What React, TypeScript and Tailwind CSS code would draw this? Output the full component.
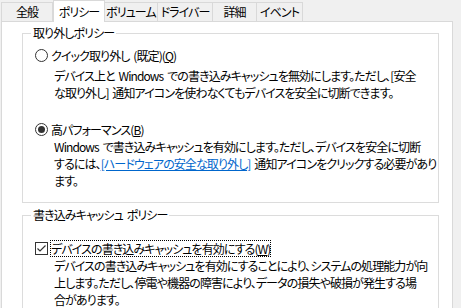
import React from 'react';

const tabs = [
    { label: '全般', w: 'w-[52px]' },
    { label: 'ポリシー', w: 'w-[52px]', active: true },
    { label: 'ボリューム', w: 'w-[54px]' },
    { label: 'ドライバー', w: 'w-[56px]' },
    { label: '詳細', w: 'w-[45px]' },
    { label: 'イベント', w: 'w-[47px]' },
];

function Radio({ checked }: { checked?: boolean }) {
    return (
        <span className="w-[13px] h-[13px] rounded-full border border-[#333333] bg-white flex items-center justify-center shrink-0">
            {checked && <span className="w-[7px] h-[7px] rounded-full bg-[#333333]" />}
        </span>
    );
}

function Checkbox() {
    return (
        <span className="w-[13px] h-[13px] border border-[#333333] bg-white flex items-center justify-center shrink-0">
            <svg width="11" height="11" viewBox="0 0 11 11">
                <path d="M1.5 5.5 L4 8 L9.5 2.5" fill="none" stroke="#333333" strokeWidth="1.2" />
            </svg>
        </span>
    );
}

export default function App() {
    return (
        <div className="w-[461px] h-[308px] bg-[#f0f0f0] overflow-hidden text-[12px] tracking-[-0.9px] [word-spacing:2px] text-black font-['Noto_Sans_CJK_JP',sans-serif] [font-feature-settings:'palt']">

            {/* Tab strip */}
            <div className="flex items-start h-[21px] pl-[1px]">
                {tabs.map((t) =>
                    t.active ? (
                        <div
                            key={t.label}
                            className={`${t.w} h-[22px] relative z-10 bg-white border-x border-t border-[#d9d9d9] flex items-center justify-center leading-[14px] whitespace-nowrap`}
                        >
                            {t.label}
                        </div>
                    ) : (
                        <div
                            key={t.label}
                            className={`${t.w} h-[19px] mt-[2px] -ml-px first:ml-0 bg-[#f0f0f0] border-x border-t border-[#d9d9d9] flex items-center justify-center leading-[14px] whitespace-nowrap`}
                        >
                            {t.label}
                        </div>
                    )
                )}
            </div>

            {/* Tab panel */}
            <div className="ml-[1px] w-[452px] h-[300px] bg-white border border-[#d9d9d9] pl-[20px] pt-[4px]">

                {/* Removal policy */}
                <fieldset className="w-[417px] border border-[#dcdcdc] pl-[12px] pb-[13px]">
                    <legend className="ml-[-4px] px-[2px] leading-[14px]">取り外しポリシー</legend>

                    <div className="flex items-center gap-[3px] h-[17px] mt-[7px]">
                        <Radio />
                        <span className="leading-[17px] whitespace-nowrap">
                            クイック取り外し (既定)(<span className="underline">Q</span>)
                        </span>
                    </div>
                    <div className="pl-[19px] mt-[3px] leading-[17px] whitespace-nowrap">
                        <div>デバイス上と Windows での書き込みキャッシュを無効にします。ただし、[安全</div>
                        <div>な取り外し] 通知アイコンを使わなくてもデバイスを安全に切断できます。</div>
                    </div>

                    <div className="flex items-center gap-[3px] h-[17px] mt-[20px]">
                        <Radio checked />
                        <span className="leading-[17px] whitespace-nowrap">
                            高パフォーマンス(<span className="underline">B</span>)
                        </span>
                    </div>
                    <div className="pl-[19px] leading-[17px] whitespace-nowrap">
                        <div>Windows で書き込みキャッシュを有効にします。ただし、デバイスを安全に切断</div>
                        <div>
                            するには、<span className="text-[#0066cc] underline">[ハードウェアの安全な取り外し]</span> 通知アイコンをクリックする必要があり
                        </div>
                        <div>ます。</div>
                    </div>
                </fieldset>

                {/* Write-caching policy */}
                <fieldset className="w-[417px] mt-[5px] border border-[#dcdcdc] pl-[12px] pb-[13px]">
                    <legend className="ml-[-4px] px-[2px] leading-[14px]">書き込みキャッシュ ポリシー</legend>

                    <div className="flex items-center gap-[2px] h-[17px] mt-[18px]">
                        <Checkbox />
                        <span className="leading-[15px] whitespace-nowrap border border-dotted border-black">
                            デバイスの書き込みキャッシュを有効にする(<span className="underline">W</span>)
                        </span>
                    </div>
                    <div className="pl-[19px] leading-[17px] whitespace-nowrap">
                        <div>デバイスの書き込みキャッシュを有効にすることにより、システムの処理能力が向</div>
                        <div>上します。ただし、停電や機器の障害により、データの損失や破損が発生する場</div>
                        <div>合があります。</div>
                    </div>
                </fieldset>
            </div>
        </div>
    );
}
